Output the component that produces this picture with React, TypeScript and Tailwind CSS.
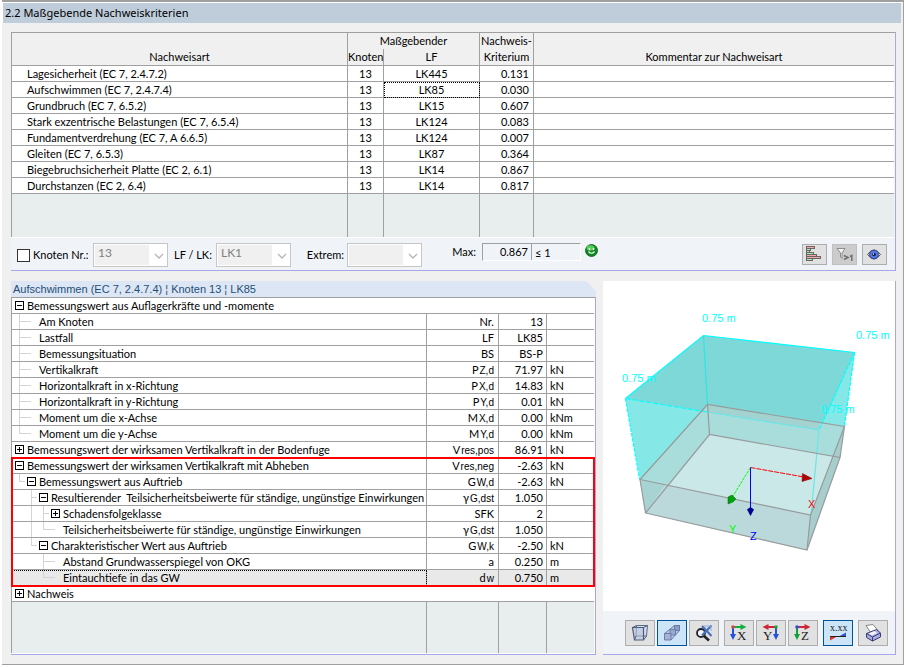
import type { ReactNode } from 'react';

const checks = [
  { name: 'Lagesicherheit (EC 7, 2.4.7.2)', node: '13', lf: 'LK445', value: '0.131' },
  { name: 'Aufschwimmen (EC 7, 2.4.7.4)', node: '13', lf: 'LK85', value: '0.030', active: true },
  { name: 'Grundbruch (EC 7, 6.5.2)', node: '13', lf: 'LK15', value: '0.607' },
  { name: 'Stark exzentrische Belastungen (EC 7, 6.5.4)', node: '13', lf: 'LK124', value: '0.083' },
  { name: 'Fundamentverdrehung (EC 7, A 6.6.5)', node: '13', lf: 'LK124', value: '0.007' },
  { name: 'Gleiten (EC 7, 6.5.3)', node: '13', lf: 'LK87', value: '0.364' },
  { name: 'Biegebruchsicherheit Platte (EC 2, 6.1)', node: '13', lf: 'LK14', value: '0.867' },
  { name: 'Durchstanzen (EC 2, 6.4)', node: '13', lf: 'LK14', value: '0.817' },
];

/* Gutter codes: ' ' empty, 'I' vertical line, 'T' branch, 'L' last branch, '-' leaf stub, 'M' collapse box, 'P' expand box */
type Detail = { guide: string; label: string; sym?: string; sub?: string; value?: string; unit?: string; selected?: boolean };

const loads: Detail[] = [
  { guide: 'T-', label: 'Am Knoten', sym: 'Nr.', value: '13' },
  { guide: 'T-', label: 'Lastfall', sym: 'LF', value: 'LK85' },
  { guide: 'T-', label: 'Bemessungsituation', sym: 'BS', value: 'BS-P' },
  { guide: 'T-', label: 'Vertikalkraft', sym: 'P', sub: 'Z,d', value: '71.97', unit: 'kN' },
  { guide: 'T-', label: 'Horizontalkraft in x-Richtung', sym: 'P', sub: 'X,d', value: '14.83', unit: 'kN' },
  { guide: 'T-', label: 'Horizontalkraft in y-Richtung', sym: 'P', sub: 'Y,d', value: '0.01', unit: 'kN' },
  { guide: 'T-', label: 'Moment um die x-Achse', sym: 'M', sub: 'X,d', value: '0.00', unit: 'kNm' },
  { guide: 'L-', label: 'Moment um die y-Achse', sym: 'M', sub: 'Y,d', value: '0.00', unit: 'kNm' },
  { guide: 'P', label: 'Bemessungswert der wirksamen Vertikalkraft in der Bodenfuge', sym: 'V', sub: 'res,pos', value: '86.91', unit: 'kN' },
];

const uplift: Detail[] = [
  { guide: 'M', label: 'Bemessungswert der wirksamen Vertikalkraft mit Abheben', sym: 'V', sub: 'res,neg', value: '-2.63', unit: 'kN' },
  { guide: 'LM', label: 'Bemessungswert aus Auftrieb', sym: 'G', sub: 'W,d', value: '-2.63', unit: 'kN' },
  { guide: ' TM', label: 'Resultierender  Teilsicherheitsbeiwerte für ständige, ungünstige Einwirkungen', sym: 'γ', sub: 'G,dst', value: '1.050' },
  { guide: ' ITP', label: 'Schadensfolgeklasse', sym: 'SFK', value: '2' },
  { guide: ' IL-', label: 'Teilsicherheitsbeiwerte für ständige, ungünstige Einwirkungen', sym: 'γ', sub: 'G,dst', value: '1.050' },
  { guide: ' LM', label: 'Charakteristischer Wert aus Auftrieb', sym: 'G', sub: 'W,k', value: '-2.50', unit: 'kN' },
  { guide: '  T-', label: 'Abstand Grundwasserspiegel von OKG', sym: 'a', value: '0.250', unit: 'm' },
  { guide: '  L-', label: 'Eintauchtiefe in das GW', sym: 'd', sub: 'w', value: '0.750', unit: 'm', selected: true },
];

const cell = 'h-4 border-b border-r border-[#a0a0a0] p-0 leading-[15px]';
const lastCell = 'h-4 border-b border-[#a0a0a0] p-0 leading-[15px]';

function Guide({ code }: { code: string }) {
  if (code === 'M' || code === 'P') {
    return (
      <span className="flex h-[15px] w-3 shrink-0 items-center justify-center">
        <button type="button" aria-label={code === 'M' ? 'Zuklappen' : 'Aufklappen'} className="block size-[9px]">
          <svg viewBox="0 0 9 9" className="block size-[9px]" shapeRendering="crispEdges">
            <rect x="0.5" y="0.5" width="8" height="8" fill="#fff" stroke="#000" />
            <path d={code === 'M' ? 'M2 4.5h5' : 'M2 4.5h5M4.5 2v5'} stroke="#000" />
          </svg>
        </button>
      </span>
    );
  }
  if (code === '-') {
    return (
      <span className="h-[15px] w-3 shrink-0">
        <span className="block h-2 w-[6px] border-b border-[#d4d4d4]" />
      </span>
    );
  }
  if (code === ' ') return <span className="w-3 shrink-0" />;
  return (
    <span className="h-[15px] w-3 shrink-0 pl-[6px]">
      <span className={code === 'I' ? 'block h-2 border-l border-[#d4d4d4]' : 'block h-2 border-b border-l border-[#d4d4d4]'} />
      <span className={code === 'L' ? 'block h-[7px]' : 'block h-[7px] border-l border-[#d4d4d4]'} />
    </span>
  );
}

function DetailRow({ row }: { row: Detail }) {
  return (
    <tr className={row.selected ? 'bg-[#e9e9e9]' : 'bg-white'}>
      <td className={row.selected ? `${cell} outline-1 -outline-offset-1 outline-dotted outline-black` : cell}>
        <div className="flex h-[15px] pl-px whitespace-pre">
          {row.guide.split('').map((code, i) => (
            <Guide key={i} code={code} />
          ))}
          <span className="pl-[2px]">{row.label}</span>
        </div>
      </td>
      <td className={`${cell} pr-1`}>
        <div className="flex h-[15px] items-baseline justify-end gap-px">
          <span>{row.sym}</span>
          {row.sub && <span className="font-['Liberation_Sans',sans-serif] text-[10px] leading-none">{row.sub}</span>}
        </div>
      </td>
      <td className={`${cell} pr-[3px] text-right`}>{row.value}</td>
      <td className={`${lastCell} pl-[3px]`}>{row.unit}</td>
    </tr>
  );
}

function Combo({ id, value }: { id: string; value: string }) {
  return (
    <div className="flex h-6 w-[75px] items-center border border-[#c6c6c6] bg-white p-px">
      <select id={id} disabled defaultValue={value} className="h-5 w-[54px] appearance-none bg-[#f0f0f0] pb-1 pl-[3px] text-[12px] leading-4 text-[#808080] opacity-100">
        <option>{value}</option>
      </select>
      <svg viewBox="0 0 17 20" className="h-5 w-[17px]" fill="none" stroke="#b4b4b4" strokeWidth="1.3">
        <path d="M6 9l4 4 4-4" />
      </svg>
    </div>
  );
}

function SmallButton({ label, dim, children }: { label: string; dim?: boolean; children: ReactNode }) {
  return (
    <button
      type="button"
      aria-label={label}
      disabled={dim}
      className={
        dim
          ? 'flex h-[21px] w-[25px] items-center justify-center border border-[#bfbfbf] bg-[#cccccc]'
          : 'flex h-[21px] w-[25px] items-center justify-center border border-[#adadad] bg-[#e1e1e1]'
      }
    >
      <svg viewBox="0 0 23 19" className="h-[19px] w-[23px] shrink-0">
        {children}
      </svg>
    </button>
  );
}

function ViewButton({ label, on, children }: { label: string; on?: boolean; children: ReactNode }) {
  return (
    <button
      type="button"
      aria-label={label}
      aria-pressed={on}
      className={
        on
          ? 'flex h-[26px] w-[30px] items-center justify-center border border-[#005499] bg-[#cce4f7]'
          : 'flex h-[26px] w-[30px] items-center justify-center border border-[#adadad] bg-[#e1e1e1]'
      }
    >
      <svg viewBox="0 0 20 20" className="size-5 shrink-0">
        {children}
      </svg>
    </button>
  );
}

function AxisIcon({ letter, across, down, mirror }: { letter: string; across: string; down: string; mirror?: boolean }) {
  return (
    <>
      <g transform={mirror ? 'translate(19 0) scale(-1 1)' : undefined}>
        <path d="M3 4h11" stroke={across} strokeWidth="2" />
        <path d="M11.500 1l6 3-6 3z" fill={across} />
        <path d="M4 4v10" stroke={down} strokeWidth="2" />
        <path d="M1 11l3 6 3-6z" fill={down} />
        <circle cx="4" cy="4" r="1.800" fill={mirror ? '#20a040' : letter === 'X' ? '#d84050' : '#3050e0'} />
      </g>
      <text x={mirror ? 2 : 8} y="17" fontSize="13" fill="#222" className="font-['Liberation_Serif',serif]">
        {letter}
      </text>
    </>
  );
}

function Foundation() {
  return (
    <svg viewBox="603 281 292 330" className="block h-[330px] w-full bg-white">
      <polygon points="625.5,398.5 703.5,335.5 854.5,352.5 844.5,426.5 810.5,515 640,479.5" fill="#86e8e6" />
      <polygon points="625.5,398.5 703.5,335.5 854.5,352.5 819,430" fill="#7dd8d7" />
      <polygon points="640,479.5 707.5,404.5 844.5,426.5 840,457.5 807,550 645.5,513" fill="#a9dddc" />
      <polygon points="707.5,404.5 820,422.5 819,430 707.5,412" fill="#a2d3d1" />
      <polygon points="709.5,434.5 840,457.5 807,550 645.5,513" fill="#c9e8e7" />
      <polygon points="640,479.5 810.5,515 807,550 645.5,513" fill="#bbd9da" />
      <polygon points="640,479.5 665,484.5 645.5,513" fill="#a8d3d3" />
      <polygon points="810.5,515 844.5,426.5 840,457.5 807,550" fill="#a7cecd" />
      <g fill="none" stroke="#00ffff" strokeWidth="1.200">
        <path d="M625.5 398.5L703.5 335.5L854.5 352.5" />
        <path d="M854.5 352.5L819 430" strokeDasharray="4 1" />
        <path d="M703.5 335.5L707.5 404.5" stroke="#30e4e4" />
        <path d="M625.5 398.5L707 412" strokeDasharray="5 2" />
        <path d="M707 412L819 430L811 515" stroke="#6ae6e6" />
        <path d="M625.5 398.5L639.5 479" strokeDasharray="4 1" />
        <path d="M854.5 352.5L844.5 426" strokeDasharray="4 1" />
      </g>
      <g fill="none" stroke="#979b9b" strokeWidth="1.200">
        <path d="M640 479.5L707.5 404.5L844.5 426.5L810.5 515z" />
        <path d="M645.5 513L709.5 434.5L840 457.5L807 550z" />
        <path d="M640 479.5L645.5 513M707.5 404.5L709.5 434.5M844.5 426.5L840 457.5M810.5 515L807 550" />
      </g>
      <path d="M750.5 467.5L804 477" stroke="#ff0000" strokeDasharray="5 1" />
      <path d="M802.5 473.5L812 478.5L802 481.5z" fill="#b00000" stroke="#800000" strokeWidth="0.5" />
      <path d="M750.5 467.5L733 496" stroke="#00ff00" strokeDasharray="3 1" />
      <path d="M728 497l4-2 4 4-3 3-5 2z" fill="#00a010" stroke="#007000" strokeWidth="0.5" />
      <path d="M750.5 467.5V508" stroke="#0000ff" />
      <path d="M747 509.5l3.500-2.500 3.500 2.500-3.500 6.500z" fill="#000090" />
      <g fontSize="11" className="font-['Liberation_Sans',sans-serif]">
        <g fill="#00ffff">
          <text x="702" y="322">0.75 m</text>
          <text x="856" y="339">0.75 m</text>
          <text x="622" y="382">0.75 m</text>
          <text x="821" y="413">0.75 m</text>
        </g>
        <text x="808" y="508" fill="#ff0000">X</text>
        <text x="729" y="533" fill="#00ff00">Y</text>
        <text x="750" y="540" fill="#0000ff">Z</text>
      </g>
    </svg>
  );
}

export default function App() {
  return (
    <div className="flex min-h-screen flex-col bg-white pr-[2px] pb-[2px] pl-[2px] font-['Lato',sans-serif] text-[11px] text-black">
      <main className="flex flex-1 flex-col border-t-2 border-r border-b border-[#a0a0a0] bg-[#f0f0f0]">
        <div className="border-t border-l border-white pr-[2px]">
          <h1 className="h-5 bg-[#bfcddb] pl-[2px] font-['Noto_Sans',sans-serif] text-[11px] leading-5">2.2 Maßgebende Nachweiskriterien</h1>
        </div>

        <div className="flex flex-1 flex-col gap-[10px] pt-[9px] pr-[7px] pb-[9px] pl-[9px]">
          <section className="border-r border-b border-[#a6a6e8] bg-[#f0f4f9]">
            <div className="border-t border-l border-[#a0a0a0] pr-px">
              <table className="w-full table-fixed border-separate border-spacing-0 bg-white">
                <colgroup>
                  <col className="w-[336px]" />
                  <col className="w-9" />
                  <col className="w-24" />
                  <col className="w-[54px]" />
                  <col />
                </colgroup>
                <thead className="bg-[#f0f0f0]">
                  <tr>
                    <th rowSpan={2} className="border-r border-b border-[#a0a0a0] p-0 align-bottom leading-4 font-normal">Nachweisart</th>
                    <th colSpan={2} className="h-4 border-r border-[#a0a0a0] p-0 leading-[14px] font-normal">Maßgebender</th>
                    <th className="h-4 border-r border-[#a0a0a0] p-0 leading-[14px] font-normal whitespace-nowrap">Nachweis-</th>
                    <th rowSpan={2} className="border-b border-[#a0a0a0] p-0 align-bottom leading-4 font-normal">Kommentar zur Nachweisart</th>
                  </tr>
                  <tr>
                    <th className="h-[17px] border-r border-b border-[#a0a0a0] p-0 leading-4 font-normal">Knoten</th>
                    <th className="border-r border-b border-[#a0a0a0] p-0 leading-4 font-normal">LF</th>
                    <th className="border-r border-b border-[#a0a0a0] p-0 leading-4 font-normal">Kriterium</th>
                  </tr>
                </thead>
                <tbody>
                  {checks.map((c) => (
                    <tr key={c.name}>
                      <td className={`${cell} pl-[15px]`}>{c.name}</td>
                      <td className={`${cell} text-center`}>{c.node}</td>
                      <td className={c.active ? `${cell} text-center outline-1 -outline-offset-1 outline-dotted outline-black` : `${cell} text-center`}>{c.lf}</td>
                      <td className={`${cell} pr-1 text-right`}>{c.value}</td>
                      <td className={lastCell} />
                    </tr>
                  ))}
                  <tr className="bg-[#e8eeee]">
                    <td className="h-[43px] border-r border-[#a0a0a0] p-0" />
                    <td className="border-r border-[#a0a0a0] p-0" />
                    <td className="border-r border-[#a0a0a0] p-0" />
                    <td className="border-r border-[#a0a0a0] p-0" />
                    <td className="p-0" />
                  </tr>
                </tbody>
              </table>
            </div>
            <div className="flex h-[33px] items-start border-t border-white pt-[5px] pr-2 pl-[6px]">
              <div className="flex h-6 items-center">
                <input id="node-filter" type="checkbox" className="size-[13px] appearance-none border border-[#333] bg-white" />
                <label htmlFor="node-filter" className="w-[63px] pl-[3px] whitespace-nowrap">Knoten Nr.:</label>
                <Combo id="node-no" value="13" />
                <label htmlFor="lf" className="w-12 pl-[6px] whitespace-nowrap">LF / LK:</label>
                <Combo id="lf" value="LK1" />
                <label htmlFor="extreme" className="w-14 pr-[3px] text-right">Extrem:</label>
                <Combo id="extreme" value="" />
              </div>
              <label htmlFor="max" className="w-[60px] pr-[6px] text-right leading-[18px]">Max:</label>
              <div className="flex h-[18px] w-[99px] border border-t-[#a0a0a0] border-r-white border-b-white border-l-[#a0a0a0]">
                <input id="max" readOnly value="0.867" className="w-[49px] border-r border-[#a0a0a0] bg-transparent pr-[3px] text-right" />
                <span className="pl-[3px] leading-[17px]">≤ 1</span>
              </div>
              <svg viewBox="0 0 13 13" className="mt-px ml-1 size-[13px]" role="img" aria-label="Nachweis erfüllt">
                <circle cx="6.500" cy="6.500" r="6" fill="#0c8a1c" stroke="#0a5a14" strokeWidth="0.800" />
                <ellipse cx="5.500" cy="4" rx="4" ry="2.800" fill="#58cc58" />
                <circle cx="4.500" cy="5" r="0.900" fill="#fff" />
                <circle cx="8.500" cy="5" r="0.900" fill="#fff" />
                <path d="M3.500 7.500q3 3.500 6 0" fill="none" stroke="#fff" strokeWidth="1.200" />
              </svg>
              <div className="ml-auto flex gap-[5px] pt-px">
                <SmallButton label="Farbbalken">
                  <g shapeRendering="crispEdges" stroke="#666" fill="#f4a8a8">
                    <path d="M3.500 1.500h8v2h-8z" />
                    <path d="M3.500 3.500h4v2h-4z" fill="#a8e8b4" />
                    <path d="M3.500 5.500h3v2h-3z" fill="#a8e8b4" />
                    <path d="M3.500 7.500h7v2h-7z" fill="#a8e8b4" />
                    <path d="M3.500 9.500h10v2h-10z" />
                    <path d="M3.500 11.500h14v2h-14z" />
                    <path d="M3.500 13.500h6v2h-6z" fill="#a8e8b4" />
                  </g>
                </SmallButton>
                <SmallButton label="Nur größer 1" dim>
                  <path d="M4 3.500h8L9 8v5.500L7.500 12V8z" fill="#f4f4f4" stroke="#8c8c8c" />
                  <path d="M11 10.500l4 2-4 2" fill="none" stroke="#707070" strokeWidth="1.500" />
                  <path d="M17 11.500l1.800-1V16" fill="none" stroke="#707070" strokeWidth="1.500" />
                </SmallButton>
                <SmallButton label="Ansicht">
                  <path d="M4.500 9.500q6.500-9 13 0-6.500 9-13 0z" fill="#d8d8dc" stroke="#555" />
                  <circle cx="11" cy="9.500" r="4.400" fill="#5478e4" stroke="#20307c" strokeWidth="0.800" />
                  <circle cx="11" cy="9.500" r="1.800" fill="#101848" />
                  <circle cx="10.500" cy="9" r="0.700" fill="#fff" />
                </SmallButton>
              </div>
            </div>
          </section>

          <div className="flex flex-1 gap-[7px]">
            <section className="flex w-[585px] shrink-0 flex-col">
              <h2 className="h-4 bg-[#dce6f4] pl-[2px] font-['Liberation_Sans',sans-serif] text-[11px] leading-4 text-[#1f4e79] [clip-path:polygon(0_0,calc(100%_-_10px)_0,100%_10px,100%_100%,0_100%)]">
                Aufschwimmen (EC 7, 2.4.7.4) ¦ Knoten 13 ¦ LK85
              </h2>
              <div className="flex-1 border-r border-b border-[#a6a6e8] bg-white pb-px">
                <div className="h-full border-t border-l border-[#a0a0a0] pr-px">
                  <table className="w-full table-fixed border-separate border-spacing-0">
                    <colgroup>
                      <col />
                      <col className="w-[72px]" />
                      <col className="w-12" />
                      <col className="w-[47px]" />
                    </colgroup>
                    <tbody>
                      <tr>
                        <td colSpan={4} className={lastCell}>
                          <div className="flex h-[15px] pl-px">
                            <Guide code="M" />
                            <span className="pl-[2px]">Bemessungswert aus Auflagerkräfte und -momente</span>
                          </div>
                        </td>
                      </tr>
                      {loads.map((r) => (
                        <DetailRow key={r.label} row={r} />
                      ))}
                    </tbody>
                    <tbody className="outline-2 -outline-offset-1 outline-[#ff0000]">
                      {uplift.map((r) => (
                        <DetailRow key={r.label} row={r} />
                      ))}
                    </tbody>
                    <tbody>
                      <tr>
                        <td colSpan={4} className={lastCell}>
                          <div className="flex h-[15px] pl-px">
                            <Guide code="P" />
                            <span className="pl-[2px]">Nachweis</span>
                          </div>
                        </td>
                      </tr>
                      <tr className="bg-[#e8eeee]">
                        <td className="h-[51px] border-r border-[#a0a0a0] p-0" />
                        <td className="border-r border-[#a0a0a0] p-0" />
                        <td className="border-r border-[#a0a0a0] p-0" />
                        <td className="p-0" />
                      </tr>
                    </tbody>
                  </table>
                </div>
              </div>
            </section>

            <section className="flex flex-1 flex-col border-r border-b border-[#a6a6e8] bg-[#f0f4f9]">
              <Foundation />
              <div className="flex flex-1 items-start justify-end gap-[5px] pt-[9px] pr-[7px] pb-2">
                <div className="flex gap-[2px]">
                  <ViewButton label="Drahtmodell">
                    <path d="M6.500 2.500h11l-1 10.500H6z" fill="#d4dcec" stroke="#5a6a8c" />
                    <path d="M2.500 4.500h11v12.500h-9z" fill="#b4c2dc" fillOpacity="0.550" stroke="#4c5c80" strokeWidth="1.200" />
                    <path d="M2.500 4.500l4-2M13.500 4.500l4-2M13.500 17l3-4M4.500 17l1.500-4" stroke="#4c5c80" />
                  </ViewButton>
                  <ViewButton label="Volumenmodell" on>
                    <g stroke="#66769e" strokeWidth="0.900">
                      <path d="M2.500 10.500L12.500 2.500h5v5L9 17z" fill="#b8c6e4" />
                      <path d="M12.500 2.500h5v5h-5z" fill="#8c9cc8" />
                      <path d="M8 6.500h5.500V12H8z" fill="#98a8d0" />
                      <path d="M2.500 10.500H9V17H2.500z" fill="#a4b2d8" />
                    </g>
                  </ViewButton>
                  <ViewButton label="Zoom zurücksetzen">
                    <circle cx="7" cy="10" r="4" fill="#f0f4fa" stroke="#222" strokeWidth="1.800" />
                    <path d="M10 13l5 4.500" stroke="#222" strokeWidth="2.600" />
                    <path d="M8 3l9.500 10M17.500 2.500L8 12.500" stroke="#4870c0" strokeWidth="2.200" />
                    <path d="M10 3h7v5" fill="none" stroke="#90acd8" />
                  </ViewButton>
                </div>
                <div className="flex gap-[2px]">
                  <ViewButton label="Ansicht in X">
                    <AxisIcon letter="X" across="#10b040" down="#2450e0" />
                  </ViewButton>
                  <ViewButton label="Ansicht in Y">
                    <AxisIcon letter="Y" across="#d02434" down="#2450e0" mirror />
                  </ViewButton>
                  <ViewButton label="Ansicht in Z">
                    <AxisIcon letter="Z" across="#d02434" down="#10a038" />
                  </ViewButton>
                </div>
                <ViewButton label="Werte anzeigen" on>
                  <text x="2" y="8" fontSize="10" fill="#222" className="font-['Liberation_Serif',serif]">x.xx</text>
                  <path d="M2 17.500v-4l8-.500z" fill="#e03030" />
                  <path d="M10 14l8-4.500V14z" fill="#3050d8" />
                  <path d="M2 13.500h16" stroke="#222" />
                </ViewButton>
                <ViewButton label="Drucken">
                  <path d="M3 2.500l7-1 5 6-6 4z" fill="#fff" stroke="#888" />
                  <path d="M3.500 10.500l10-4 4 3.500v4l-8 4-6-3.500z" fill="#a8ace4" stroke="#3c3c70" />
                  <path d="M3.500 10.500l6 3.500 8-4M9.500 14v4" fill="none" stroke="#3c3c70" />
                  <path d="M5.500 10.500l6-2.500 2.500 2-5 2.500z" fill="#f4f4ff" />
                </ViewButton>
              </div>
            </section>
          </div>
        </div>
      </main>
    </div>
  );
}
